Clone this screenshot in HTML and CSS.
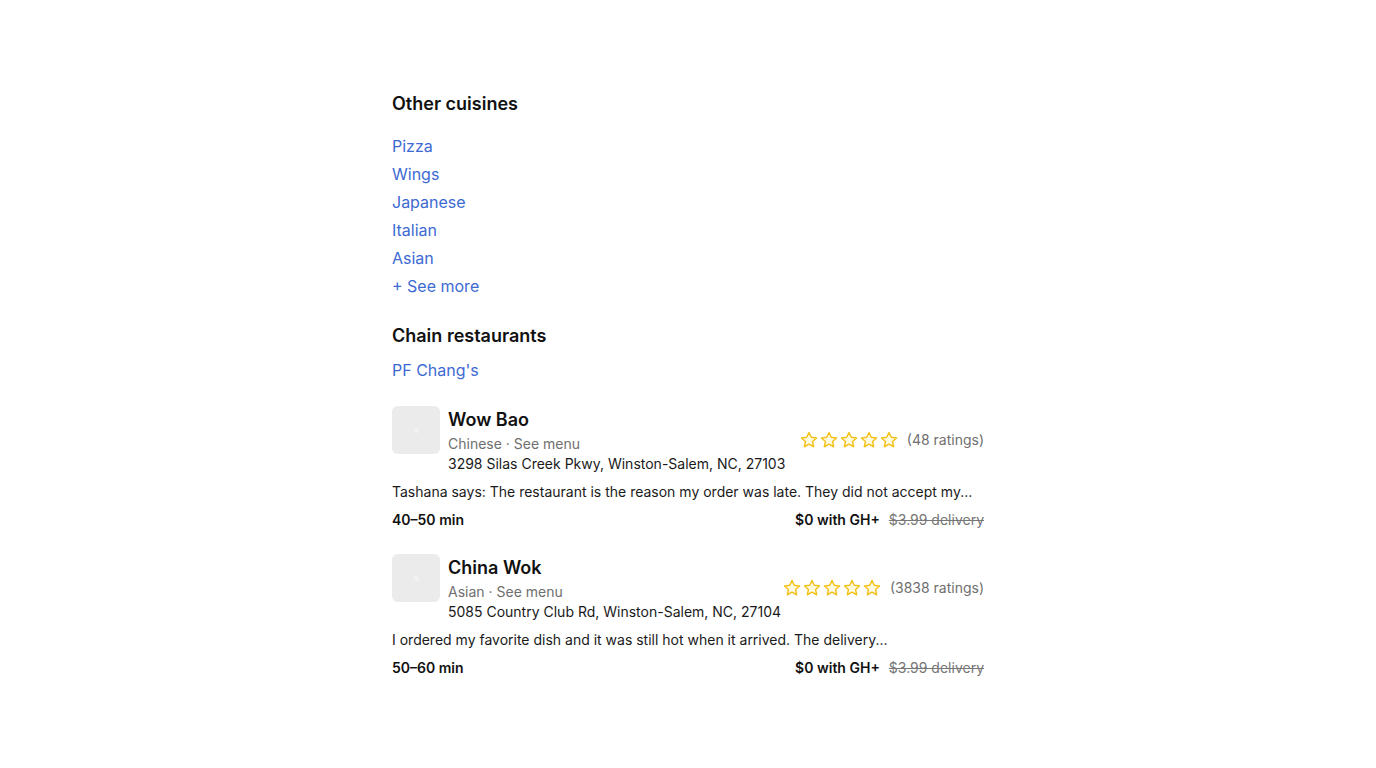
FILE: index.html
```html
<!DOCTYPE html>
<html>
<head>
<meta charset="utf-8">
<link rel="stylesheet" href="styles.css">
</head>
<body>
<main class="page">
  <section class="group">
    <h2 class="heading">Other cuisines</h2>
    <ul class="links">
      <li><a href="#">Pizza</a></li>
      <li><a href="#">Wings</a></li>
      <li><a href="#">Japanese</a></li>
      <li><a href="#">Italian</a></li>
      <li><a href="#">Asian</a></li>
      <li><a href="#">+ See more</a></li>
    </ul>
  </section>
  <section class="group chains">
    <h2 class="heading">Chain restaurants</h2>
    <ul class="links">
      <li><a href="#">PF Chang's</a></li>
    </ul>
  </section>

  <article class="card">
    <div class="top">
      <div class="thumb"><span class="dot"></span></div>
      <div class="info">
        <div class="name">Wow Bao</div>
        <div class="meta-row">
          <div class="meta">Chinese · See menu</div>
          <div class="rating">
            <span class="stars">
              <svg viewBox="0 0 20 20"><path d="M10 1.6l2.5 5.4 5.9.7-4.4 4 1.2 5.8L10 14.6l-5.2 2.9 1.2-5.8-4.4-4 5.9-.7z"/></svg><svg viewBox="0 0 20 20"><path d="M10 1.6l2.5 5.4 5.9.7-4.4 4 1.2 5.8L10 14.6l-5.2 2.9 1.2-5.8-4.4-4 5.9-.7z"/></svg><svg viewBox="0 0 20 20"><path d="M10 1.6l2.5 5.4 5.9.7-4.4 4 1.2 5.8L10 14.6l-5.2 2.9 1.2-5.8-4.4-4 5.9-.7z"/></svg><svg viewBox="0 0 20 20"><path d="M10 1.6l2.5 5.4 5.9.7-4.4 4 1.2 5.8L10 14.6l-5.2 2.9 1.2-5.8-4.4-4 5.9-.7z"/></svg><svg viewBox="0 0 20 20"><path d="M10 1.6l2.5 5.4 5.9.7-4.4 4 1.2 5.8L10 14.6l-5.2 2.9 1.2-5.8-4.4-4 5.9-.7z"/></svg>
            </span>
            <span class="count">(48 ratings)</span>
          </div>
        </div>
        <div class="address">3298 Silas Creek Pkwy, Winston-Salem, NC, 27103</div>
      </div>
    </div>
    <p class="review">Tashana says: The restaurant is the reason my order was late. They did not accept my...</p>
    <div class="bottom">
      <span class="time">40–50 min</span>
      <span class="fees"><b>$0 with GH+</b><s>$3.99 delivery</s></span>
    </div>
  </article>

  <article class="card">
    <div class="top">
      <div class="thumb"><span class="dot"></span></div>
      <div class="info">
        <div class="name">China Wok</div>
        <div class="meta-row">
          <div class="meta">Asian · See menu</div>
          <div class="rating">
            <span class="stars">
              <svg viewBox="0 0 20 20"><path d="M10 1.6l2.5 5.4 5.9.7-4.4 4 1.2 5.8L10 14.6l-5.2 2.9 1.2-5.8-4.4-4 5.9-.7z"/></svg><svg viewBox="0 0 20 20"><path d="M10 1.6l2.5 5.4 5.9.7-4.4 4 1.2 5.8L10 14.6l-5.2 2.9 1.2-5.8-4.4-4 5.9-.7z"/></svg><svg viewBox="0 0 20 20"><path d="M10 1.6l2.5 5.4 5.9.7-4.4 4 1.2 5.8L10 14.6l-5.2 2.9 1.2-5.8-4.4-4 5.9-.7z"/></svg><svg viewBox="0 0 20 20"><path d="M10 1.6l2.5 5.4 5.9.7-4.4 4 1.2 5.8L10 14.6l-5.2 2.9 1.2-5.8-4.4-4 5.9-.7z"/></svg><svg viewBox="0 0 20 20"><path d="M10 1.6l2.5 5.4 5.9.7-4.4 4 1.2 5.8L10 14.6l-5.2 2.9 1.2-5.8-4.4-4 5.9-.7z"/></svg>
            </span>
            <span class="count">(3838 ratings)</span>
          </div>
        </div>
        <div class="address">5085 Country Club Rd, Winston-Salem, NC, 27104</div>
      </div>
    </div>
    <p class="review">I ordered my favorite dish and it was still hot when it arrived. The delivery...</p>
    <div class="bottom">
      <span class="time">50–60 min</span>
      <span class="fees"><b>$0 with GH+</b><s>$3.99 delivery</s></span>
    </div>
  </article>
</main>
</body>
</html>
```
FILE: styles.css
```css
* { box-sizing: border-box; }
html, body { margin: 0; padding: 0; background: #fff; }
body {
  font-family: Inter, "Noto Sans", sans-serif;
  color: #1a1a1a;
}
.page {
  width: 592px;
  margin: 0 auto;
  padding-top: 91px;
}
.group { margin: 0; }
.heading {
  margin: 0;
  font-size: 18px;
  font-weight: 600;
  line-height: 26px;
  color: #111;
}
.links {
  list-style: none;
  margin: 15px 0 0;
  padding: 0;
}
.links li {
  font-size: 16px;
  line-height: 28px;
}
.links a {
  color: #3d6ad2;
  text-decoration: none;
}
.chains { margin-top: 23px; }
.chains .links { margin-top: 7px; }

.card { margin-top: 22px; }
.card + .card { margin-top: 24px; }
.top {
  display: flex;
  gap: 8px;
}
.thumb {
  width: 48px;
  height: 48px;
  border-radius: 6px;
  background: #ebebeb;
  flex: none;
  display: flex;
  align-items: center;
  justify-content: center;
}
.dot {
  width: 5px;
  height: 5px;
  border-radius: 50%;
  background: #f2f2f2;
}
.info { flex: 1; }
.name {
  font-size: 18px;
  font-weight: 600;
  line-height: 26px;
  padding-top: 1px;
  color: #111;
}
.meta-row {
  display: flex;
  justify-content: space-between;
  align-items: flex-start;
  margin-top: 1px;
}
.meta {
  font-size: 14px;
  line-height: 20px;
  color: #6f6f6f;
}
.rating {
  display: flex;
  align-items: center;
  gap: 9px;
  margin-top: -4px;
}
.stars { display: flex; gap: 2px; }
.stars svg {
  width: 18px;
  height: 18px;
  fill: #fffbe0;
  stroke: #f2c21b;
  stroke-width: 1.6;
  stroke-linejoin: round;
}
.count {
  font-size: 14px;
  line-height: 20px;
  color: #6f6f6f;
}
.address {
  font-size: 14px;
  line-height: 20px;
  color: #1a1a1a;
}
.review {
  margin: 8px 0 0;
  font-size: 14px;
  line-height: 20px;
  color: #1a1a1a;
}
.bottom {
  display: flex;
  justify-content: space-between;
  margin-top: 8px;
  font-size: 14px;
  line-height: 20px;
}
.time { font-weight: 600; color: #111; }
.fees b { font-weight: 600; color: #111; }
.fees s {
  color: #777;
  margin-left: 9px;
}
```
